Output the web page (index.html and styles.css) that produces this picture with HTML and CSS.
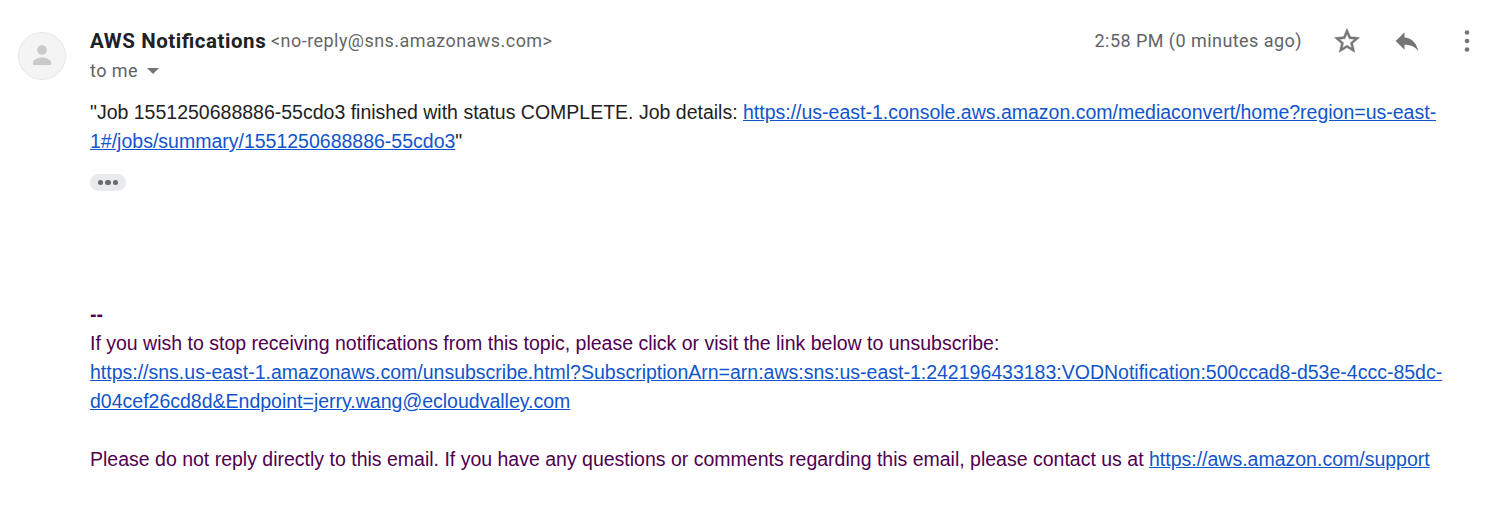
FILE: index.html
```html
<!DOCTYPE html>
<html lang="en">
<head>
<meta charset="utf-8">
<title>AWS Notifications</title>
<link rel="stylesheet" href="styles.css">
</head>
<body>
<article class="mail">
  <div class="avatar">
    <svg viewBox="0 0 48 48" width="48" height="48"><circle cx="24" cy="24" r="23.5" fill="#f4f4f4" stroke="#e6e6e6"/><circle cx="24" cy="18" r="4.800" fill="#cacaca"/><path d="M15 33v-2.700c0-3.300 6-4.900 9-4.900s9 1.600 9 4.900v2.700z" fill="#cacaca"/></svg>
  </div>
  <div class="content">
    <header class="head">
      <div class="sender"><span class="name">AWS Notifications</span><span class="address">&lt;no-reply@sns.amazonaws.com&gt;</span></div>
      <div class="tools">
        <span class="time">2:58 PM (0 minutes ago)</span>
        <svg class="star" viewBox="0 0 24 24" width="30" height="30"><path d="M22 9.240l-7.190-.62L12 2 9.190 8.630 2 9.240l5.460 4.730L5.820 21 12 17.270 18.180 21l-1.630-7.030L22 9.240zM12 15.400l-3.760 2.270 1-4.280-3.320-2.880 4.380-.38L12 6.100l1.710 4.040 4.380.38-3.320 2.880 1 4.280L12 15.400z"/></svg>
        <svg class="reply" viewBox="0 0 24 24" width="30" height="30"><path d="M10 9V5l-7 7 7 7v-4.100c5 0 8.500 1.600 11 5.100-1-5-4-10-11-11z"/></svg>
        <svg class="more" viewBox="0 0 24 24" width="30" height="30"><circle cx="12" cy="5.200" r="1.850"/><circle cx="12" cy="12" r="1.850"/><circle cx="12" cy="18.800" r="1.850"/></svg>
      </div>
    </header>
    <div class="recipient"><span>to me</span><i class="caret"></i></div>
    <div class="body">
      <div class="l1">"Job 1551250688886-55cdo3 finished with status COMPLETE. Job details: <a href="#">https://us-east-1.console.aws.amazon.com/mediaconvert/home?region=us-east-</a></div>
      <div class="l2"><a href="#">1#/jobs/summary/1551250688886-55cdo3</a>"</div>
    </div>
    <div class="trim"><i></i><i></i><i></i></div>
    <div class="footer">
      <div class="dash">--</div>
      <div class="l3">If you wish to stop receiving notifications from this topic, please click or visit the link below to unsubscribe:</div>
      <div class="l4"><a href="#">https://sns.us-east-1.amazonaws.com/unsubscribe.html?SubscriptionArn=arn:aws:sns:us-east-1:242196433183:VODNotification:500ccad8-d53e-4ccc-85dc-</a></div>
      <div class="l5"><a href="#">d04cef26cd8d&amp;Endpoint=jerry.wang@ecloudvalley.com</a></div>
      <div class="l6">Please do not reply directly to this email. If you have any questions or comments regarding this email, please contact us at <a href="#">https://aws.amazon.com/support</a></div>
    </div>
  </div>
</article>
</body>
</html>
```
FILE: styles.css
```css
body { margin: 0; background: #fff; }
.mail { display: flex; height: 520px; overflow: hidden; padding-left: 18px; box-sizing: border-box; }
.avatar { width: 72px; flex: none; padding-top: 32px; }
.avatar svg { display: block; }
.content { flex: 1; min-width: 0; padding-top: 26px; white-space: nowrap; }
.head { display: flex; justify-content: space-between; height: 30px; line-height: 30px; font-family: Roboto, sans-serif; color: #5f6368; padding-right: 11px; }
.sender { display: flex; }
.name { width: 181px; font-size: 20.500px; font-weight: 700; letter-spacing: 0.55px; font-feature-settings: "liga" 1; color: #202124; }
.address, .time { font-size: 18px; letter-spacing: 0.45px; }
.address { color: #666; }
.tools { display: flex; }
.tools svg { fill: #757575; }
.tools .star { margin-left: 30px; stroke: #757575; stroke-width: 0.4; }
.reply { margin-left: 30px; }
.more { margin-left: 30px; }
.recipient { display: flex; align-items: center; gap: 9px; height: 30px; font: 18px/30px Roboto, sans-serif; letter-spacing: 0.45px; color: #5f6368; }
.caret { border: 6px solid transparent; border-top-color: #757575; border-bottom: 0; }
.body, .footer { font: 19.500px/29px "Liberation Sans", Arial, sans-serif; color: #222; }
.body { padding-top: 12px; }
a { color: #15c; text-decoration: underline; }
.trim { display: flex; align-items: center; justify-content: center; gap: 2px; width: 36px; height: 17px; margin-top: 18px; border-radius: 9px; background: #e8eaed; }
.trim i { width: 5.500px; height: 5.500px; border-radius: 50%; background: #66696d; }
.footer { padding-top: 109px; color: #500050; }
.dash { font-weight: 700; }
.l6 { margin-top: 29px; }
```
